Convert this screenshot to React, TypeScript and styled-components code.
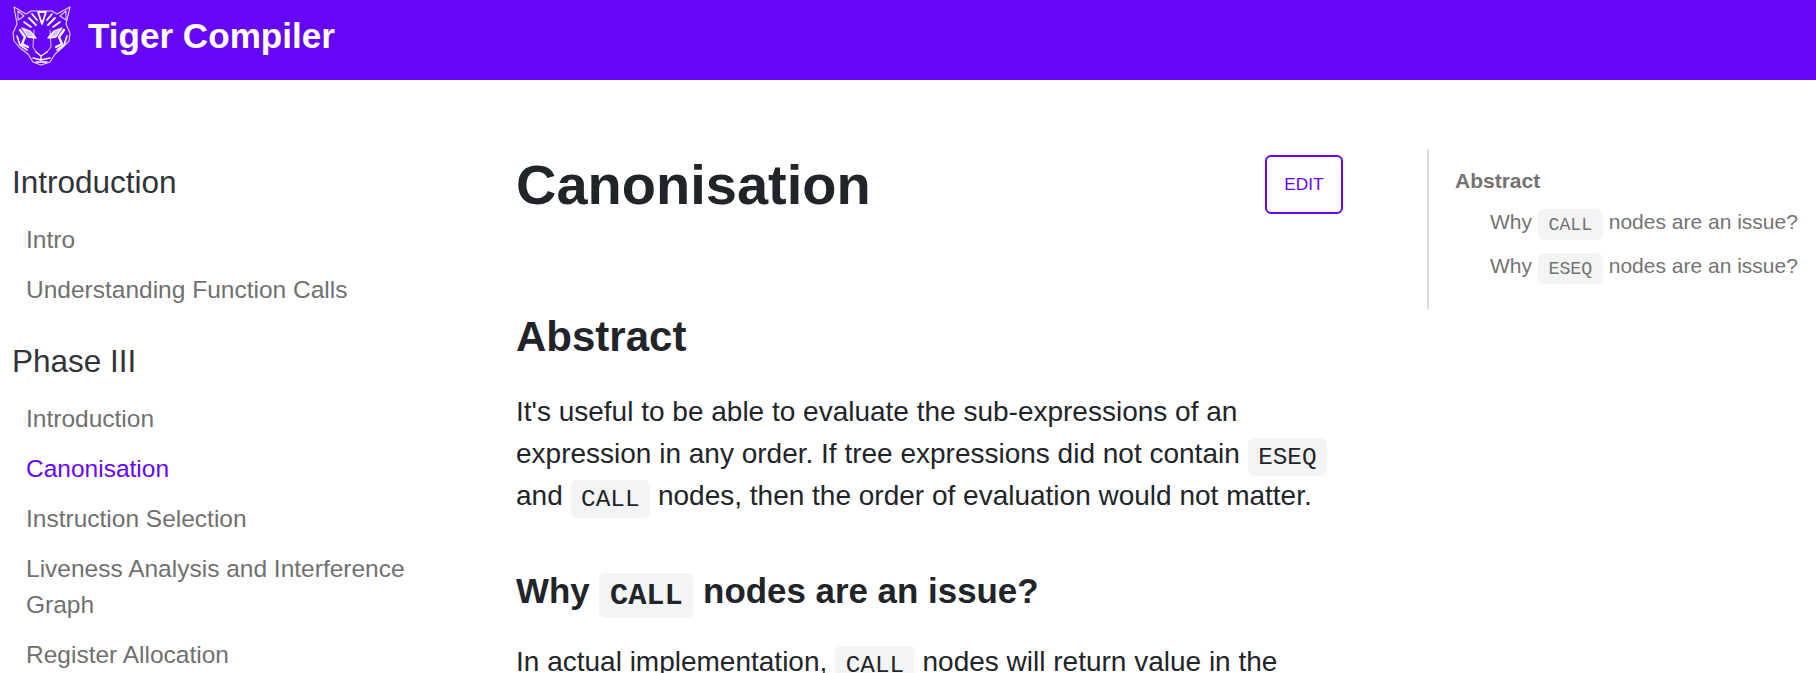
import React from "react";
import styled, { createGlobalStyle } from "styled-components";

const Global = createGlobalStyle`
  html, body { margin: 0; padding: 0; height: 100%; overflow: hidden; background: #fff; }
  body { font-family: "Liberation Sans", Arial, sans-serif; color: #212529; }
  * { box-sizing: border-box; }
`;

const Page = styled.div`display: flex; flex-direction: column; height: 673px; overflow: hidden;`;
const Navbar = styled.header`
  height: 80px; flex: none; background: #6606f9; display: flex; align-items: center; padding: 0 12px; gap: 17px;
`;
const LogoMark = styled.svg`margin-bottom: 8px; flex: none;`;
const Title = styled.span`color: #fff; font-weight: 700; font-size: 35.1px; margin-bottom: 9px; margin-left: -1px;`;
const Main = styled.div`display: flex; flex: 1; min-height: 0; overflow: hidden;`;
const Sidebar = styled.nav`width: 516px; flex: none; padding: 77px 0 0 12px;`;
const Category = styled.div`
  font-size: 31.5px; line-height: 50px; color: #303438; margin-bottom: 8px;
  &:not(:first-child) { margin-top: 21px; }
`;
const MenuItem = styled.a<{ $active?: boolean }>`
  display: block; width: 400px; padding: 7px 0 7px 14px; font-size: 24.5px; line-height: 36px;
  color: ${p => (p.$active ? "#6606f9" : "#707070")};
`;
const Content = styled.main`width: 827px; flex: none; padding-top: 69px;`;
const TitleRow = styled.div`display: flex; justify-content: space-between; align-items: flex-start; margin-bottom: 88px;`;
const H1 = styled.h1`margin: 0; font-size: 56px; line-height: 72px; font-weight: 700;`;
const EditButton = styled.a`
  margin-top: 6px; width: 78px; height: 59px; border: 2.4px solid #6606f9; border-radius: 6px; color: #6606f9;
  font-size: 17.3px; display: flex; align-items: center; justify-content: center;
`;
const H2 = styled.h2`margin: 0 0 26px; font-size: 42px; line-height: 56px; font-weight: 700;`;
const H3 = styled.h3`margin: 47px 0 23px; font-size: 34.9px; line-height: 54px; font-weight: 700;`;
const Para = styled.p`margin: 0; font-size: 28px; line-height: 42px;`;
const Code = styled.code`
  font-family: "Liberation Mono", monospace; font-size: 87%; line-height: 1; background: #f3f4f4; border-radius: 6px;
  padding: 5.5px 10.6px; font-weight: inherit;
`;
const Toc = styled.aside`
  margin-left: 84px; padding: 17px 0 0 26px; height: 160px; border-left: 2px solid #dadde1; margin-top: 69px;
  color: #737373; width: 388px; flex: none;
`;
const TocTop = styled.div`font-weight: 700; font-size: 21px; line-height: 30px; margin-bottom: 4px;`;
const TocItem = styled.div`padding-left: 35px; font-size: 21px; line-height: 44px; white-space: nowrap;`;

const Tiger = () => (
  <LogoMark width="60" height="60" viewBox="12 6 60 60" fill="none" stroke="#fff" strokeWidth="1.1" strokeLinejoin="round" strokeLinecap="round">
    <path d="M14 7L26 14L31 11H52L57 14L70 7L66 24L70 33L69 41L62 48L55 54L50 62L41 65L33 62L28 54L20 48L14 41L13 33L17 24Z" opacity=".85" />
    <path d="M18 11L24 16L18 20ZM66 11L60 16L66 20Z" opacity=".8" />
    <path d="M34 30L33 47L36 52M50 30L51 47L47 52" opacity=".7" />
    <path d="M36 52L41 56L47 52M41 56V59M33 58L41 60L50 58M36 62H47" strokeWidth="1.4" />
    <path d="M22 28L30 31L36 38L28 37ZM62 28L54 31L48 38L56 37Z" fill="#fff" fillOpacity=".75" strokeWidth="1.3" />
    <path d="M38 12L46 12L44 18L42 24L40 18ZM32 14L37 20M52 14L47 20M29 18L36 25M55 18L48 25" strokeWidth="1.8" />
    <path d="M20 30L25 37L22 44L28 47M64 30L59 37L62 44L56 47" strokeWidth="2.2" />
    <path d="M17 36L20 45L27 50M67 36L64 45L57 50M24 22L31 27M60 22L53 27" strokeWidth="1.6" />
  </LogoMark>
);

export default function App() {
  return (
    <Page>
      <Global />
      <Navbar>
        <Tiger />
        <Title>Tiger Compiler</Title>
      </Navbar>
      <Main>
        <Sidebar>
          <Category>Introduction</Category>
          <MenuItem>Intro</MenuItem>
          <MenuItem>Understanding Function Calls</MenuItem>
          <Category>Phase III</Category>
          <MenuItem>Introduction</MenuItem>
          <MenuItem $active>Canonisation</MenuItem>
          <MenuItem>Instruction Selection</MenuItem>
          <MenuItem>Liveness Analysis and Interference Graph</MenuItem>
          <MenuItem>Register Allocation</MenuItem>
        </Sidebar>
        <Content>
          <TitleRow>
            <H1>Canonisation</H1>
            <EditButton>EDIT</EditButton>
          </TitleRow>
          <H2>Abstract</H2>
          <Para>
            It's useful to be able to evaluate the sub-expressions of an expression in any order. If tree expressions did not contain <Code>ESEQ</Code> and <Code>CALL</Code> nodes, then the order of evaluation would not matter.
          </Para>
          <H3>Why <Code>CALL</Code> nodes are an issue?</H3>
          <Para>
            In actual implementation, <Code>CALL</Code> nodes will return value in the same register.
          </Para>
        </Content>
        <Toc>
          <TocTop>Abstract</TocTop>
          <TocItem>Why <Code>CALL</Code> nodes are an issue?</TocItem>
          <TocItem>Why <Code>ESEQ</Code> nodes are an issue?</TocItem>
        </Toc>
      </Main>
    </Page>
  );
}
